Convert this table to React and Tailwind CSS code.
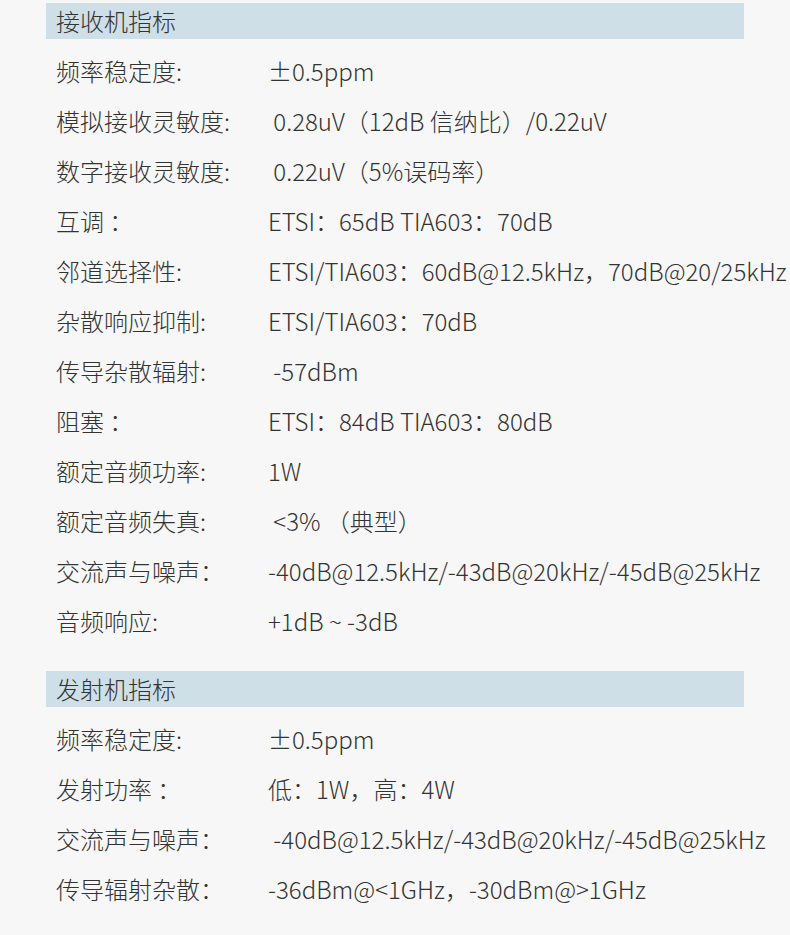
const receiver = [
  ["频率稳定度:", "±0.5ppm"],
  ["模拟接收灵敏度:", " 0.28uV（12dB 信纳比）/0.22uV"],
  ["数字接收灵敏度:", " 0.22uV（5%误码率）"],
  ["互调 ：", "ETSI：65dB TIA603：70dB"],
  ["邻道选择性:", "ETSI/TIA603：60dB@12.5kHz，70dB@20/25kHz"],
  ["杂散响应抑制:", "ETSI/TIA603：70dB"],
  ["传导杂散辐射:", " -57dBm"],
  ["阻塞 ：", "ETSI：84dB TIA603：80dB"],
  ["额定音频功率:", "1W"],
  ["额定音频失真:", " <3% （典型）"],
  ["交流声与噪声：", "-40dB@12.5kHz/-43dB@20kHz/-45dB@25kHz"],
  ["音频响应:", "+1dB ~ -3dB"],
];

const transmitter = [
  ["频率稳定度:", "±0.5ppm"],
  ["发射功率 ：", "低：1W，高：4W"],
  ["交流声与噪声：", " -40dB@12.5kHz/-43dB@20kHz/-45dB@25kHz"],
  ["传导辐射杂散：", "-36dBm@<1GHz，-30dBm@>1GHz"],
];

const Section = ({ title, rows }) => (
  <div className="flex flex-col">
    <div className="mx-[46px] h-9 bg-[#cfdfe7] pl-[10px] flex items-center text-[24px] font-light text-[#333]">
      {title}
    </div>
    <div className="mt-[7px] flex flex-col">
      {rows.map(([label, value], i) => (
        <div key={i} className="h-[50px] flex items-center pl-[56px] text-[24px] font-light text-[#333] whitespace-pre">
          <span className="w-[212px] shrink-0">{label}</span>
          <span>{value}</span>
        </div>
      ))}
    </div>
  </div>
);

export default function App() {
  return (
    <div
      className="w-[790px] h-[935px] bg-[#f7f7f7] pt-[3px] flex flex-col overflow-hidden"
      style={{ fontFamily: '"Noto Sans CJK SC", "Noto Sans", sans-serif' }}
    >
      <Section title="接收机指标" rows={receiver} />
      <div className="h-[25px]" />
      <Section title="发射机指标" rows={transmitter} />
    </div>
  );
}
